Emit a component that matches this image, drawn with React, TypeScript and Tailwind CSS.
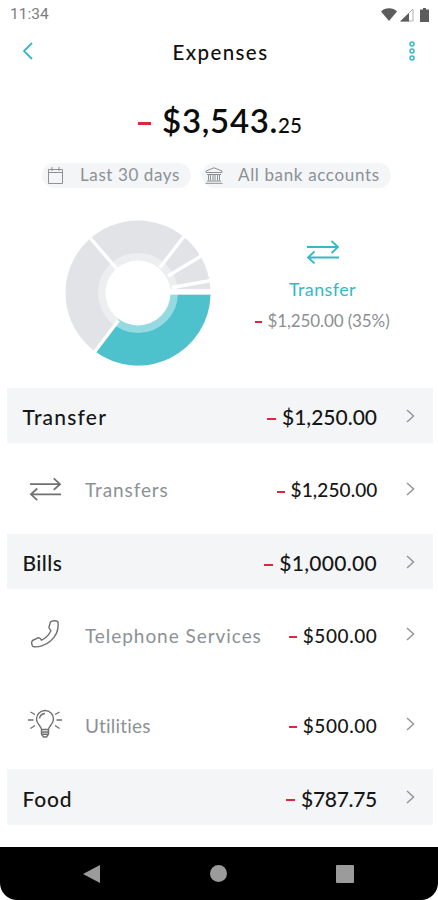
import type { ReactNode } from 'react';

interface Item {
  id: string;
  name: string;
  amount: string;
  icon: ReactNode;
  height: string;
  tracking: string;
  amountTracking: string;
}

interface Category {
  id: string;
  name: string;
  amount: string;
  height: string;
  tracking: string;
  amountTracking: string;
  items: Item[];
}

function TransferIcon({ className }: { className: string }) {
  return (
    <svg viewBox="0 0 34 24" className={className} fill="none" stroke="currentColor" strokeWidth="1.8">
      <path d="M1 7H32M25.5 1L32 7L25.5 13M33 17.5H2M8.5 11.5L2 17.5L8.5 23.5" />
    </svg>
  );
}

function PhoneIcon() {
  return (
    <svg viewBox="0 0 30 30" className="w-[30px] h-[30px]" fill="none" stroke="#6f6f6f" strokeWidth="1.4" strokeLinejoin="round">
      <path d="M20.500 3C22 1.300 26 1.300 28 2.800C28.800 10 26 17.500 20.500 22C15.500 26.500 8 28.700 3 27.500C1.500 26 1.200 23 2.500 21.500L8 18.800C10 18.300 10.500 20 11.500 21.200C15 19.500 18.500 16.500 20.500 12.500C22 11.500 18.500 10 19 8Z" />
    </svg>
  );
}

function BulbIcon() {
  return (
    <svg viewBox="0 0 34 30" className="w-[34px] h-[30px]" fill="none" stroke="#6f6f6f" strokeWidth="1.4">
      <path d="M13.500 20.500C13.500 17 8.500 15.500 8.500 10A8.500 8.500 0 0 1 25.500 10C25.500 15.500 20.500 17 20.500 20.500ZM13.500 20.500V25L15.500 28H18.500L20.500 25V20.500M13.500 23H20.500M13.800 25.300H20.200" />
      <path d="M11.500 9.500C12 6.500 14 4.700 17 4.500" />
      <path d="M0 11H5.500M28.500 11H34M2.500 3L7 5.500M31.500 3L27 5.500M2.500 19.500L7 16.500M31.500 19.500L27 16.500" />
    </svg>
  );
}

const categories: Category[] = [
  {
    id: 'transfer',
    name: 'Transfer',
    amount: '$1,250.00',
    height: 'h-[55px]',
    tracking: 'tracking-[1.200px]',
    amountTracking: 'tracking-[0px]',
    items: [
      {
        id: 'transfers',
        name: 'Transfers',
        amount: '$1,250.00',
        icon: <TransferIcon className="w-[33px] h-[24px] text-[#707070]" />,
        height: 'h-[91px]',
        tracking: 'tracking-[0.9px]',
        amountTracking: 'tracking-[0.1px]',
      },
    ],
  },
  {
    id: 'bills',
    name: 'Bills',
    amount: '$1,000.00',
    height: 'h-[55px]',
    tracking: 'tracking-[0.4px]',
    amountTracking: 'tracking-[0.3px]',
    items: [
      {
        id: 'telephone',
        name: 'Telephone Services',
        amount: '$500.00',
        icon: <PhoneIcon />,
        height: 'h-[90px]',
        tracking: 'tracking-[0.950px]',
        amountTracking: 'tracking-[0.600px]',
      },
      {
        id: 'utilities',
        name: 'Utilities',
        amount: '$500.00',
        icon: <BulbIcon />,
        height: 'h-[90px]',
        tracking: 'tracking-[0.200px]',
        amountTracking: 'tracking-[0.600px]',
      },
    ],
  },
  {
    id: 'food',
    name: 'Food',
    amount: '$787.75',
    height: 'h-[56px]',
    tracking: 'tracking-[0.8px]',
    amountTracking: 'tracking-[-0.300px]',
    items: [],
  },
];

function Minus({ className }: { className: string }) {
  return <span className={`${className} shrink-0 bg-[#e0263f]`} />;
}

function Chevron() {
  return (
    <svg viewBox="0 0 9 14" className="w-[9px] h-[14px]" fill="none" stroke="#92979a" strokeWidth="1.5">
      <path d="M1 1L7.500 7L1 13" />
    </svg>
  );
}

function DonutChart() {
  return (
    <svg viewBox="-74 -74 148 148" className="w-[148px] h-[148px]">
      <circle r="72.500" fill="#e1e3e6" />
      <path d="M0 1.500H72.500A72.500 72.500 0 0 1 -43.500 58L0 0Z" fill="#4dc1cc" />
      <circle r="36" fill="none" stroke="#ffffff" strokeOpacity="0.4" strokeWidth="8" />
      <circle r="32.500" fill="#ffffff" />
      <g stroke="#ffffff" strokeWidth="3.400">
        <path d="M-21 -24L-50 -57.500" />
        <path d="M22 -25.500L47 -58" />
        <path d="M30 -17L64 -37.500" />
        <path d="M34 -5.500L73 -12.500" />
        <path d="M-19.500 27.500L-45 61" />
      </g>
      <path d="M30 -1.300H74" stroke="#ffffff" strokeWidth="5.400" />
    </svg>
  );
}

export default function App() {
  return (
    <div className="w-[438px] h-[900px] bg-white overflow-hidden flex flex-col font-['Lato','Liberation_Sans',sans-serif]">
      {/* Status bar */}
      <div className="h-7 pt-px pl-[10px] pr-[8px] flex items-center justify-between">
        <span className="pt-px font-['Roboto',sans-serif] text-[15.500px] text-[#7c7c7c] leading-none">11:34</span>
        <div className="flex items-center text-[#5c5c5c]">
          <svg viewBox="0 0 16 13" className="w-4 h-[13px] mb-px" fill="currentColor">
            <path d="M0 3.500C4 -0.700 12 -0.700 16 3.500L8 13Z" />
          </svg>
          <svg viewBox="0 0 14 14" className="w-[14px] h-[14px] ml-[3px]">
            <path d="M13 1V13H1Z" fill="#ffffff" stroke="#b0b0b0" />
            <path d="M9 5V13.500H0Z" fill="currentColor" />
          </svg>
          <svg viewBox="0 0 9 14" className="w-[9px] h-[14px] ml-[6px] mr-px" fill="currentColor">
            <path d="M3 0H6V1.500H9V14H0V1.500H3Z" />
          </svg>
        </div>
      </div>

      {/* Header */}
      <div className="h-[50px] pl-[22px] pr-[22px] flex items-center justify-between">
        <svg viewBox="0 0 11 18" className="w-[11px] h-[18px] mb-[5px]" fill="none" stroke="#35b8c8" strokeWidth="1.800">
          <path d="M10 1L2 9L10 17" />
        </svg>
        <h1 className="mb-[2px] text-[20.500px] font-medium text-[#111111] tracking-[1.400px] leading-none">Expenses</h1>
        <svg viewBox="0 0 8 20" className="w-2 h-5 mb-[5px]" fill="none" stroke="#35b8c8" strokeWidth="1.500">
          <circle cx="4" cy="3" r="2" />
          <circle cx="4" cy="10" r="2" />
          <circle cx="4" cy="17" r="2" />
        </svg>
      </div>

      {/* Total */}
      <div className="h-[85px] pl-[2px] flex items-center justify-center">
        <Minus className="w-[13px] h-[3px] mt-[6px]" />
        <p className="ml-[11px] text-[#0c0c0c] font-semibold leading-none">
          <span className="text-[33px] tracking-[0.700px]">$3,543.</span>
          <span className="text-[20.500px] font-medium">25</span>
        </p>
      </div>

      {/* Filters */}
      <div className="h-[25px] pl-[42px] flex gap-[11px] text-[17px] text-[#8b9196]">
        <button className="w-[149px] h-[25px] pl-[6px] rounded-full bg-[#f3f5f7] flex items-center">
          <svg viewBox="0 0 15 17" className="w-[15px] h-[17px]" fill="none" stroke="currentColor">
            <path d="M0.500 2.500H14.500V16.500H0.500ZM0.500 5.500H14.500M4 0V4M11 0V4" />
          </svg>
          <span className="ml-[17px] mb-[2px] leading-none whitespace-nowrap tracking-[0.600px]">Last 30 days</span>
        </button>
        <button className="w-[189px] h-[25px] pl-[3px] rounded-full bg-[#f3f5f7] flex items-center">
          <svg viewBox="0 0 18 17" className="w-[18px] h-[17px]" fill="none" stroke="currentColor">
            <path d="M1 5.500V4L9 0.800L17 4V5.500ZM2 7.500H16M3.500 7.500V13.500M5.500 7.500V13.500M8 7.500V13.500M10 7.500V13.500M12.500 7.500V13.500M14.500 7.500V13.500M2 14H16M0.500 16.300H17.500" />
          </svg>
          <span className="ml-[15px] mb-[2px] leading-none whitespace-nowrap tracking-[0.650px]">All bank accounts</span>
        </button>
      </div>

      {/* Chart */}
      <div className="h-[200px] pl-[63.500px] pt-[30.500px] flex">
        <DonutChart />
        <div className="ml-[26px] w-[170px] pt-[21px] flex flex-col items-center">
          <TransferIcon className="w-[34px] h-[24px] text-[#35b8c8]" />
          <p className="mt-[15px] text-[18px] leading-[20px] text-[#35b8c8] tracking-[0.400px]">Transfer</p>
          <div className="mt-[12px] flex items-center">
            <Minus className="w-[7px] h-[2px] mt-[3px]" />
            <span className="ml-[5px] text-[17px] leading-[20px] text-[#8b8f92] whitespace-nowrap tracking-[-0.100px]">$1,250.00 (35%)</span>
          </div>
        </div>
      </div>

      {/* Expense list */}
      <div className="h-[459px] ml-[6.500px] mr-[5px]">
        {categories.map((category) => (
          <div key={category.id}>
            <div className={`${category.height} pl-[16px] pr-[18.500px] bg-[#f3f5f7] flex items-center`}>
              <h2 className={`${category.tracking} pt-[2px] text-[21px] leading-none font-medium text-[#161616]`}>{category.name}</h2>
              <div className="ml-auto flex items-center pt-[2px]">
                <Minus className="w-[9px] h-[2px] mt-1" />
                <span className={`${category.amountTracking} ml-[6px] text-[21px] leading-none font-medium text-[#161616]`}>{category.amount}</span>
              </div>
              <div className="ml-[28.500px]">
                <Chevron />
              </div>
            </div>
            {category.items.map((item) => (
              <div key={item.id} className={`${item.height} pl-[21px] pr-[18.500px] flex items-center`}>
                <div className="w-[35px] flex justify-center">{item.icon}</div>
                <span className={`${item.tracking} ml-[22.500px] pt-[2px] text-[19px] leading-none text-[#8b9196] whitespace-nowrap`}>{item.name}</span>
                <div className="ml-auto flex items-center pt-[2px]">
                  <Minus className="w-[8px] h-[2px] mt-1" />
                  <span className={`${item.amountTracking} ml-[6px] text-[19px] leading-none font-medium text-[#161616]`}>{item.amount}</span>
                </div>
                <div className="ml-[28px]">
                  <Chevron />
                </div>
              </div>
            ))}
          </div>
        ))}
      </div>

      {/* Android navigation */}
      <div className="h-[53px] bg-black rounded-b-[17px] flex items-center justify-between pl-[83px] pr-[84px]">
        <svg viewBox="0 0 17 18" className="w-[17px] h-[18px]" fill="#9b9b9b">
          <path d="M17 0V18L0 9Z" />
        </svg>
        <span className="w-[17px] h-[17px] ml-px rounded-full bg-[#9b9b9b]" />
        <span className="w-[18px] h-[18px] rounded-[1px] bg-[#9b9b9b]" />
      </div>
    </div>
  );
}
